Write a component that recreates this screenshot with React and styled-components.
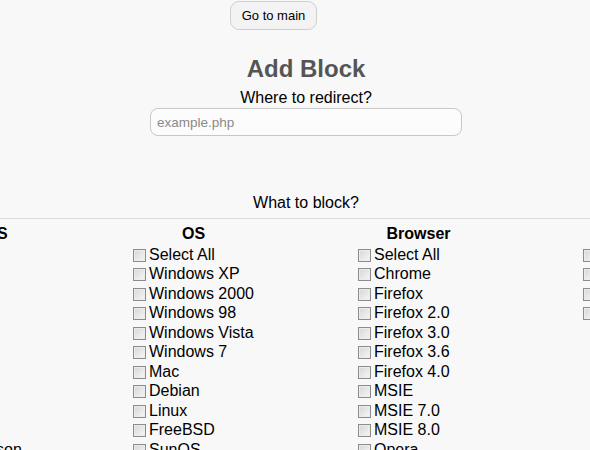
import React from 'react'
import styled, { createGlobalStyle } from 'styled-components'

const GlobalStyle = createGlobalStyle`
  html, body {
    margin: 0;
    background: #f8f8f8;
    font-family: 'Liberation Sans', Arial, sans-serif;
    color: #000;
  }
`

const columns = [
  {
    title: 'Mobile OS',
    items: ['Select All', 'iPhone', 'iPod', 'iPad', 'Android', 'Nokia', 'Palm', 'Symbian', 'Samsung', 'Motorola', 'SonyEricsson', 'HTC']
  },
  {
    title: 'OS',
    items: ['Select All', 'Windows XP', 'Windows 2000', 'Windows 98', 'Windows Vista', 'Windows 7', 'Mac', 'Debian', 'Linux', 'FreeBSD', 'SunOS', 'OpenBSD']
  },
  {
    title: 'Browser',
    items: ['Select All', 'Chrome', 'Firefox', 'Firefox 2.0', 'Firefox 3.0', 'Firefox 3.6', 'Firefox 4.0', 'MSIE', 'MSIE 7.0', 'MSIE 8.0', 'Opera', 'Safari']
  },
  {
    title: 'Language',
    items: ['Select All', 'English', 'Russian', 'German']
  }
]

const App = () => {
  return (
    <Page>
      <GlobalStyle />
      <Content>
        <TopBar>
          <Button type='button'>Go to main</Button>
        </TopBar>
        <Title>Add Block</Title>
        <Label>Where to redirect?</Label>
        <Input placeholder='example.php' />
        <BlockLabel>What to block?</BlockLabel>
        <TableWrap>
          <Table>
            {columns.map((col) => (
              <Column key={col.title}>
                <ColumnTitle>{col.title}</ColumnTitle>
                <List>
                  {col.items.map((item) => (
                    <Item key={item}>
                      <Check type='checkbox' />
                      <span>{item}</span>
                    </Item>
                  ))}
                </List>
              </Column>
            ))}
          </Table>
        </TableWrap>
      </Content>
    </Page>
  )
}

const Page = styled.div`
  width: 590px;
  height: 450px;
  overflow: hidden;
`

const Content = styled.div`
  width: 612px;
  display: flex;
  flex-direction: column;
  align-items: center;
  text-align: center;
`

const TopBar = styled.div`
  align-self: stretch;
  display: flex;
  justify-content: center;
  padding: 1px 65px 0 0;
`

const Button = styled.button`
  height: 29px;
  padding: 0 11px;
  border: 1px solid #cfcfcf;
  border-radius: 9px;
  background: #f3f3f3;
  font-family: 'Liberation Sans', Arial, sans-serif;
  font-size: 13px;
  color: #000;
`

const Title = styled.h1`
  margin: 25px 0 0;
  font-size: 24px;
  line-height: 28px;
  font-weight: bold;
  color: #555;
`

const Label = styled.div`
  margin-top: 6px;
  font-size: 16px;
  line-height: 18px;
`

const Input = styled.input`
  box-sizing: border-box;
  width: 312px;
  height: 28px;
  margin-top: 1px;
  padding: 0 6px;
  border: 1px solid #c8c8c8;
  border-radius: 8px;
  background: #fcfcfc;
  font-family: 'Liberation Sans', Arial, sans-serif;
  font-size: 13.5px;
  outline: none;

  &::placeholder {
    color: #8a8a8a;
  }
`

const BlockLabel = styled(Label)`
  margin-top: 58px;
`

const TableWrap = styled.div`
  align-self: stretch;
  display: flex;
  justify-content: center;
  margin-top: 6px;
`

const Table = styled.div`
  flex: none;
  display: flex;
  border-top: 1px solid #dcdcdc;
`

const Column = styled.div`
  width: 225px;
  padding-top: 6px;
`

const ColumnTitle = styled.div`
  font-size: 16px;
  line-height: 18px;
  font-weight: bold;
  text-align: center;
  margin-bottom: 2px;
`

const List = styled.div`
  padding-left: 52px;
  text-align: left;
`

const Item = styled.label`
  display: flex;
  align-items: center;
  height: 19.5px;
  font-size: 16px;
  line-height: 18px;
  white-space: nowrap;
`

const Check = styled.input`
  appearance: none;
  box-sizing: border-box;
  width: 13px;
  height: 13px;
  margin: 1px 3px 0 0;
  border: 1px solid #8c8c8c;
  background: linear-gradient(135deg, #d6d6d6, #f7f7f7);
  box-shadow: inset 0 0 0 1px #ececec;
  flex: none;
`

export default App
